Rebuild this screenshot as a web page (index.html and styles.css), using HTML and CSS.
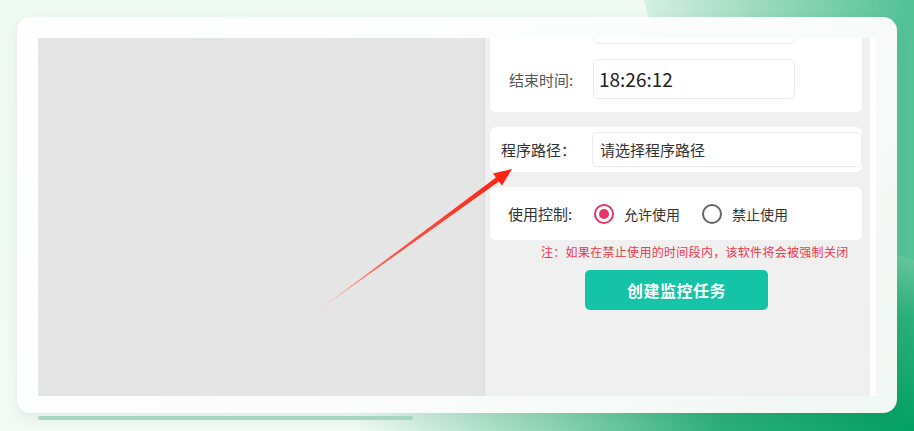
FILE: index.html
```html
<!DOCTYPE html>
<html>
<head>
    <meta charset="utf-8">
    <title>创建监控任务</title>
    <link rel="stylesheet" href="styles.css">
</head>
<body>
    <div class="backdrop"></div>

    <div class="card">
        <div class="frame">
            <div class="preview"></div>

            <div class="panel">
                <div class="box box-time">
                    <!-- start time row, scrolled out of view -->
                    <div class="row">
                        <label></label>
                        <div class="field"></div>
                    </div>
                    <div class="row">
                        <label>结束时间:</label>
                        <div class="field time">18:26:12</div>
                    </div>
                </div>

                <div class="box box-path">
                    <label>程序路径：</label>
                    <div class="field path">请选择程序路径</div>
                </div>

                <div class="box box-mode">
                    <label>使用控制:</label>
                    <span class="radio checked"></span>
                    <span class="radio-text">允许使用</span>
                    <span class="radio"></span>
                    <span class="radio-text">禁止使用</span>
                </div>

                <p class="note">注：如果在禁止使用的时间段内，该软件将会被强制关闭</p>

                <button class="create">创建监控任务</button>
            </div>
        </div>
    </div>
    <div class="scrollbar"></div>

    <!-- pointer to the path field -->
    <svg class="arrow" width="914" height="431" viewBox="0 0 914 431">
        <defs>
            <linearGradient id="arrowFill" x1="316" y1="312" x2="512" y2="169" gradientUnits="userSpaceOnUse">
                <stop offset="0" stop-color="#ffc2ba"/>
                <stop offset="0.35" stop-color="#ff5a48"/>
                <stop offset="1" stop-color="#ff1f10"/>
            </linearGradient>
        </defs>
        <polygon fill="url(#arrowFill)" points="316,312 495.9,177.6 493,173.5 512,169 502,185.6 498.9,181.6"/>
    </svg>
</body>
</html>
```

FILE: styles.css
```css
body {
    margin: 0;
    padding: 17px;
    width: 880px;
    height: 397px;
    overflow: hidden;
    font-family: "Noto Sans CJK SC", "Noto Sans", sans-serif;
    background:
        radial-gradient(ellipse 560px 330px at 100% 100%, #03a165 0%, #2db07c 35%, #8fd5b6 65%, rgba(240, 250, 245, 0) 100%),
        linear-gradient(180deg, #eefaf2 0%, #f3fbf7 100%);
}

.backdrop {
    position: fixed;
    left: 630px;
    top: -470px;
    width: 740px;
    height: 740px;
    border-radius: 50%;
    background: linear-gradient(90deg, #dcf2e8 0%, #9ad9bd 18%, #55c298 37%, #3bb788 100%);
    z-index: -1;
}

.card {
    height: 358px;
    padding: 21px 21px 17px 21px;
    background: linear-gradient(135deg, #ffffff 0%, #fbfdfc 50%, #f1f7f4 100%);
    border-radius: 14px;
    box-shadow: 0 6px 16px rgba(0, 60, 40, 0.08);
}

.frame {
    display: flex;
    width: 832px;
    height: 358px;
    padding-right: 6px;
    background: #fff;
}

.preview {
    width: 446px;
    background: #e5e5e5;
    border-right: 1px solid #dcdcdc;
}

.panel {
    display: flex;
    flex-direction: column;
    width: 380px;
    padding-left: 5px;
    background: #f0f0f0;
    overflow: hidden;
}

.box {
    width: 372px;
    box-sizing: border-box;
    background: #fff;
    border-radius: 6px;
}

.box label {
    font-size: 15px;
    color: #444;
}

.field {
    box-sizing: border-box;
    background: #fff;
    border: 1px solid #ececec;
    border-radius: 5px;
    color: #222;
}

.box-time {
    display: flex;
    flex-direction: column;
    gap: 15px;
    margin-top: -47px;
    padding: 13px 0 13px 19px;
}

.row {
    display: flex;
    align-items: center;
}

.row label {
    width: 84px;
    color: #555;
}

.row .field {
    width: 202px;
    height: 40px;
    padding-left: 5px;
    line-height: 38px;
    font-size: 19px;
}

.box-path {
    display: flex;
    align-items: center;
    margin-top: 15px;
    height: 45px;
    padding-left: 11px;
}

.box-path label {
    width: 91px;
    color: #333;
}

.field.path {
    width: 270px;
    height: 35px;
    padding-left: 7px;
    line-height: 33px;
    font-size: 15px;
    color: #333;
}

.box-mode {
    display: flex;
    align-items: center;
    margin-top: 15px;
    height: 53px;
    padding-left: 18px;
}

.box-mode label {
    width: 86px;
    color: #333;
}

.radio {
    width: 20px;
    height: 20px;
    box-sizing: border-box;
    border: 2px solid #666;
    border-radius: 50%;
    display: flex;
    align-items: center;
    justify-content: center;
}

.radio.checked {
    border-color: #e8336b;
}

.radio.checked::after {
    content: "";
    width: 10px;
    height: 10px;
    border-radius: 50%;
    background: #e8336b;
}

.radio-text {
    margin: 0 22px 0 10px;
    font-size: 14px;
    color: #333;
}

.note {
    margin: 4px 0 0 51px;
    font-size: 12px;
    line-height: 16px;
    letter-spacing: 0.3px;
    color: #ee3a4b;
}

.create {
    align-self: flex-start;
    margin: 10px 0 0 95px;
    width: 183px;
    height: 40px;
    border: none;
    border-radius: 5px;
    background: #15c3a6;
    color: #fff;
    font-family: inherit;
    font-size: 16px;
    font-weight: bold;
    letter-spacing: 0.5px;
}

.scrollbar {
    width: 375px;
    height: 4px;
    margin: 3px 0 0 21px;
    border-radius: 2px;
    background: #a3d6c4;
}

.arrow {
    position: absolute;
    left: 0;
    top: 0;
    pointer-events: none;
}
```
